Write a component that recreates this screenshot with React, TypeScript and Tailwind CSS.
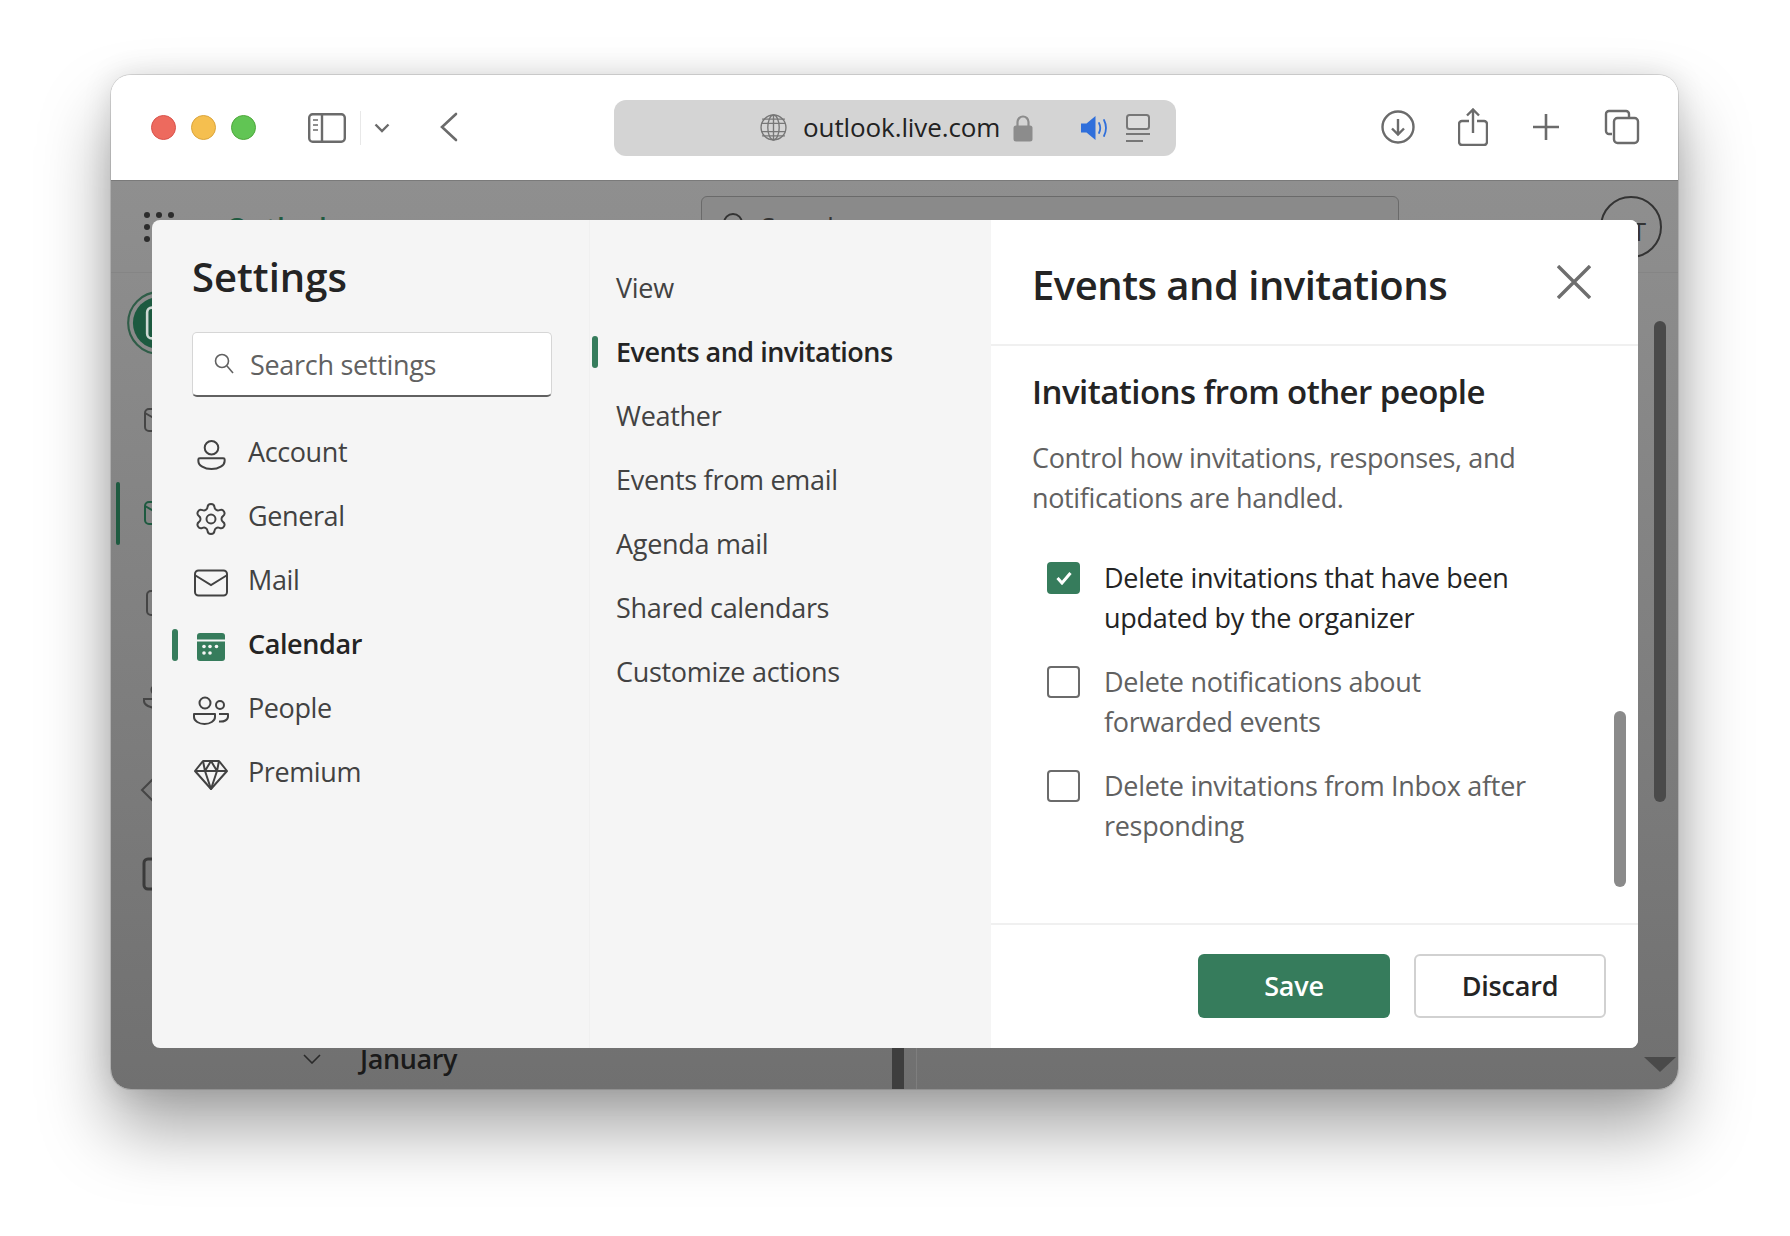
import React from "react";
import { Settings as SettingsIcon } from "lucide-react";

const font = "font-['Open_Sans','Noto_Sans',sans-serif]";

function Account() {
  return (
    <svg width="29" height="32" viewBox="0 0 32 33" fill="none" stroke="#424242" strokeWidth="2.200">
      <circle cx="16" cy="8.500" r="7.500" />
      <path d="M3 20h26c1 0 1.500.5 1.500 1.500v1.500c0 5-6.500 9-14.500 9S1.500 28 1.500 23v-1.500C1.500 20.500 2 20 3 20z" strokeLinejoin="round" />
    </svg>
  );
}
function Mail() {
  return (
    <svg width="34" height="28" viewBox="0 0 34 28" fill="none" stroke="#424242" strokeWidth="2">
      <rect x="1" y="1.500" width="32" height="25" rx="3.500" />
      <path d="M1.500 6.500 17 16 32.500 6.500" />
    </svg>
  );
}
function Cal() {
  return (
    <svg width="30" height="30" viewBox="0 0 30 30">
      <rect x="1" y="1" width="28" height="28" rx="3" fill="#367c5c" />
      <rect x="1" y="7.500" width="28" height="2" fill="#f5f5f5" />
      <g fill="#f5f5f5">
        <circle cx="8" cy="14.500" r="1.800" />
        <circle cx="14" cy="14.500" r="1.800" />
        <circle cx="20.500" cy="14.500" r="1.800" />
        <circle cx="8" cy="21" r="1.800" />
        <circle cx="14" cy="21" r="1.800" />
      </g>
    </svg>
  );
}
function People() {
  return (
    <svg width="36" height="30" viewBox="0 0 36 30" fill="none" stroke="#424242" strokeWidth="2">
      <circle cx="12" cy="7" r="5.500" />
      <circle cx="27" cy="9" r="4" />
      <path d="M1 18h21v3c0 4-5 7-10.500 7S1 25 1 21z" strokeLinejoin="round" />
      <path d="M26 18h9v2.500c0 3.500-4 5.500-9 5" strokeLinejoin="round" />
    </svg>
  );
}
function Diamond() {
  return (
    <svg width="34" height="32" viewBox="0 0 34 32" fill="none" stroke="#424242" strokeWidth="2" strokeLinejoin="round">
      <path d="M9 2h16l8 10-16 18L1 12z" />
      <path d="M1 12h32M11 12l6 18 6-18M9 2l2 10 6-10 6 10 2-10" />
    </svg>
  );
}

const sections: { label: string; icon: React.ReactNode; active?: boolean }[] = [
  { label: "Account", icon: <Account /> },
  { label: "General", icon: <SettingsIcon size={36} strokeWidth={1.300} color="#424242" /> },
  { label: "Mail", icon: <Mail /> },
  { label: "Calendar", icon: <Cal />, active: true },
  { label: "People", icon: <People /> },
  { label: "Premium", icon: <Diamond /> },
];

const subs = ["View", "Events and invitations", "Weather", "Events from email", "Agenda mail", "Shared calendars", "Customize actions"];

const checks = [
  { a: "Delete invitations that have been", b: "updated by the organizer", on: true },
  { a: "Delete notifications about", b: "forwarded events", on: false },
  { a: "Delete invitations from Inbox after", b: "responding", on: false },
];

function Toolbar() {
  return (
    <div className="flex h-[105px] items-center bg-white pl-[40px] pr-[38px]">
      <div className="flex gap-[15px]">
        <span className="h-[25px] w-[25px] rounded-full border border-[#d9534c] bg-[#ed6a5e]" />
        <span className="h-[25px] w-[25px] rounded-full border border-[#dba53c] bg-[#f5bf4f]" />
        <span className="h-[25px] w-[25px] rounded-full border border-[#4fa83d] bg-[#61c554]" />
      </div>
      <svg className="ml-[52px]" width="38" height="30" viewBox="0 0 38 30" fill="none" stroke="#6b6b6b" strokeWidth="2.400">
        <rect x="1.200" y="1.200" width="35.600" height="27.600" rx="3.500" />
        <path d="M14 1v28" />
        <path d="M5 7h5M5 12h5M5 17h5" strokeWidth="1.600" />
      </svg>
      <span className="ml-[14px] h-[34px] w-px bg-[#e8e8e8]" />
      <svg className="ml-[13px]" width="16" height="10" viewBox="0 0 16 10" fill="none" stroke="#6b6b6b" strokeWidth="2.400">
        <path d="M1.500 1.500 8 8l6.500-6.500" />
      </svg>
      <svg className="mb-[2px] ml-[49px]" width="20" height="30" viewBox="0 0 20 30" fill="none" stroke="#6b6b6b" strokeWidth="2.600" strokeLinecap="round">
        <path d="M17 2 3 15l14 13" />
      </svg>
      <div className="ml-[155px] flex h-[56px] w-[562px] items-center rounded-[12px] bg-[#d4d4d4] pl-[146px]">
        <svg width="27" height="27" viewBox="0 0 26 26" fill="none" stroke="#777" strokeWidth="1.300">
          <circle cx="13" cy="13" r="12" />
          <ellipse cx="13" cy="13" rx="5.500" ry="12" />
          <path d="M13 1v24M1.500 9h23M1.500 17h23M2 5h22M2 21h22" />
        </svg>
        <span className={`ml-[16px] text-[26px] text-[#222] ${font} tracking-[-0.1px]`}>outlook.live.com</span>
        <svg className="ml-[13px]" width="20" height="28" viewBox="0 0 20 28" fill="none">
          <path d="M4.500 12V8a5.500 5.500 0 0 1 11 0v4" stroke="#8c8c8c" strokeWidth="2.200" />
          <rect x="0.500" y="11.500" width="19" height="16" rx="2.500" fill="#8c8c8c" />
        </svg>
        <svg className="ml-[47px]" width="30" height="26" viewBox="0 0 30 26">
          <path d="M1 8.500h5.500L15.500 1v24l-9-7.500H1z" fill="#2f6fdb" />
          <path d="M19 8c1.500 3 1.500 7 0 10M24 5c2.500 5 2.500 11 0 16" fill="none" stroke="#2f6fdb" strokeWidth="1.800" strokeLinecap="round" />
        </svg>
        <svg className="ml-[16px]" width="24" height="28" viewBox="0 0 24 28" fill="none" stroke="#777" strokeWidth="2">
          <rect x="1" y="1" width="22" height="14" rx="2.500" fill="#dcdcdc" />
          <path d="M0 20h24M0 27h17" />
        </svg>
      </div>
      <div className="mb-[2px] ml-auto flex items-center">
        <svg width="34" height="34" viewBox="0 0 34 34" fill="none" stroke="#6b6b6b" strokeWidth="2.400">
          <circle cx="17" cy="17" r="15.500" />
          <path d="M17 9v15M11 18.500l6 6 6-6" />
        </svg>
        <svg className="ml-[43px]" width="30" height="38" viewBox="0 0 30 38" fill="none" stroke="#6b6b6b" strokeWidth="2.400">
          <path d="M11 13H4a3 3 0 0 0-3 3v18a3 3 0 0 0 3 3h22a3 3 0 0 0 3-3V16a3 3 0 0 0-3-3h-7" />
          <path d="M15 25V2M9 7.500 15 1.500l6 6" />
        </svg>
        <svg className="ml-[44px]" width="28" height="28" viewBox="0 0 28 28" fill="none" stroke="#6b6b6b" strokeWidth="2.600">
          <path d="M14 1v26M1 14h26" />
        </svg>
        <svg className="ml-[44px]" width="36" height="36" viewBox="0 0 36 36" fill="none" stroke="#6b6b6b" strokeWidth="2.400">
          <path d="M8 25H5a3 3 0 0 1-3-3V5a3 3 0 0 1 3-3h17a3 3 0 0 1 3 3v3" />
          <rect x="10" y="9" width="24" height="25" rx="3.500" />
        </svg>
      </div>
    </div>
  );
}

function Rail() {
  return (
    <div className="relative flex w-[100px] shrink-0 flex-col items-start pl-[16px] pt-[18px]">
      <span className="absolute left-[5px] top-[209px] h-[63px] w-[4px] rounded-full bg-[#1e5a40]" />
      <svg width="64" height="64" viewBox="0 0 54 54" fill="none">
        <circle cx="27" cy="27" r="26" stroke="#2f5d48" strokeWidth="1.800" />
        <circle cx="27" cy="27" r="22" fill="#1d5a40" />
        <rect x="17" y="14" width="20" height="26" rx="4" stroke="#cfd8d3" strokeWidth="2.200" />
      </svg>
      <svg className="ml-[17px] mt-[53px]" width="30" height="24" viewBox="0 0 30 24" fill="none" stroke="#454545" strokeWidth="2">
        <rect x="1" y="1" width="28" height="22" rx="4" />
        <path d="m1 5 14 8 14-8" />
      </svg>
      <svg className="ml-[17px] mt-[69px]" width="30" height="24" viewBox="0 0 30 24" fill="none" stroke="#1e5a40" strokeWidth="2">
        <rect x="1" y="1" width="28" height="22" rx="4" />
        <path d="m1 5 14 8 14-8" />
      </svg>
      <svg className="ml-[19px] mt-[65px]" width="30" height="26" viewBox="0 0 30 26" fill="none" stroke="#454545" strokeWidth="2">
        <rect x="1" y="1" width="28" height="24" rx="4" />
      </svg>
      <svg className="ml-[15px] mt-[67px]" width="30" height="26" viewBox="0 0 30 26" fill="none" stroke="#454545" strokeWidth="2">
        <circle cx="15" cy="7" r="5.500" />
        <path d="M2 16h26v2c0 4-6 7-13 7S2 22 2 18z" />
      </svg>
      <svg className="ml-[12px] mt-[66px]" width="30" height="30" viewBox="0 0 30 30" fill="none" stroke="#454545" strokeWidth="2">
        <path d="m15 3 12 12-12 12L3 15z" />
      </svg>
      <svg className="ml-[15px] mt-[52px]" width="30" height="34" viewBox="0 0 30 34" fill="none" stroke="#3a3a3a" strokeWidth="3">
        <rect x="2" y="2" width="26" height="30" rx="4" />
        <circle cx="15" cy="11" r="3" />
        <circle cx="15" cy="23" r="3" />
      </svg>
    </div>
  );
}

function DimmedPage() {
  return (
    <div className="flex flex-1 flex-col border-t border-[#7a7a7a] bg-gradient-to-b from-[#8f8f8f] via-[#808080] to-[#707070]">
      <div className="flex h-[92px] shrink-0 items-start border-b border-[#858585] pl-[33px] pr-[16px]">
        <div className="mt-[31px] grid grid-cols-3 gap-[6px]">
          {Array.from({ length: 9 }).map((_, i) => (
            <span key={i} className="h-[6px] w-[6px] rounded-full bg-[#2c2c2c]" />
          ))}
        </div>
        <span className={`ml-[52px] mt-[26px] text-[28px] font-semibold text-[#1f5a40] ${font}`}>Outlook</span>
        <div className="ml-[366px] mt-[15px] flex h-[60px] w-[698px] items-start rounded-[6px] border border-[#6a6a6a] bg-[#8a8a8a] pl-[20px] pt-[10px]">
          <svg className="mt-[5px]" width="24" height="24" viewBox="0 0 24 24" fill="none" stroke="#333" strokeWidth="2">
            <circle cx="11" cy="11" r="9" />
          </svg>
          <span className={`ml-[15px] text-[26px] text-[#333] ${font}`}>Search</span>
        </div>
        <div className="ml-auto mt-[15px] flex h-[62px] w-[62px] items-center justify-center rounded-full border-2 border-[#333] pl-[16px] pt-[8px]">
          <span className={`text-[26px] text-[#333] ${font}`}>T</span>
        </div>
      </div>
      <div className="flex flex-1">
        <Rail />
        <div className="flex w-[681px] shrink-0 flex-col justify-end pb-[10px] pl-[92px]">
          <div className="flex h-[40px] items-center gap-[39px]">
            <svg width="18" height="10" viewBox="0 0 18 10" fill="none" stroke="#2a2a2a" strokeWidth="1.600">
              <path d="M1 1l8 8 8-8" />
            </svg>
            <span className={`text-[27px] font-semibold tracking-[-0.4px] text-[#1a1a1a] ${font}`}>January</span>
          </div>
        </div>
        <div className="w-[12px] shrink-0 bg-[#3e3e3e]" />
        <div className="ml-[12px] w-px shrink-0 bg-[#7e7e7e]" />
        <div className="flex-1" />
        <div className="mr-[2px] flex w-[32px] shrink-0 flex-col items-center pb-[17px] pt-[48px]">
          <span className="h-[481px] w-[12px] rounded-full bg-[#4a4a4a]" />
          <svg className="mt-auto" width="32" height="15" viewBox="0 0 32 15">
            <path d="M0 0h32L16 15z" fill="#4a4a4a" />
          </svg>
        </div>
      </div>
    </div>
  );
}

export default function App() {
  return (
    <div className={`h-[1236px] w-[1790px] bg-white pl-[111px] pt-[75px] ${font}`}>
      <div className="relative flex h-[1014px] w-[1567px] flex-col overflow-hidden rounded-[20px] shadow-[0_0_0_1px_rgba(0,0,0,0.12),0_0_30px_rgba(0,0,0,0.12),0_40px_70px_rgba(0,0,0,0.36)]">
        <Toolbar />
        <DimmedPage />
        <div className="absolute left-[41px] top-[145px] flex h-[828px] w-[1486px] overflow-hidden rounded-[8px] bg-[#f5f5f5]">
          <aside className="flex w-[438px] flex-col border-r border-[#f0f0f0] pl-[40px] pr-[37px]">
            <h1 className="mt-[29px] text-[40px] font-semibold leading-[56px] text-[#242424]">Settings</h1>
            <div className="mt-[27px] flex h-[65px] items-center rounded-[5px] border border-[#d6d6d6] border-b-[2px] border-b-[#616161] bg-white pl-[21px]">
              <svg width="20" height="22" viewBox="0 0 20 22" fill="none" stroke="#616161" strokeWidth="1.600">
                <circle cx="8" cy="8" r="6.500" />
                <path d="m13 13 6 7" />
              </svg>
              <span className="ml-[16px] mt-[2px] text-[27px] text-[#616161] tracking-[-0.3px]">Search settings</span>
            </div>
            <nav className="mt-[23px] flex flex-col">
              {sections.map((s) => (
                <div key={s.label} className="relative flex h-[64px] items-center">
                  {s.active && <span className="absolute left-[-20px] top-[17px] h-[32px] w-[6px] rounded-full bg-[#367c5c]" />}
                  <span className="mt-[6px] flex w-[38px] justify-center">{s.icon}</span>
                  <span className={`ml-[18px] text-[27px] tracking-[-0.4px] ${s.active ? "font-semibold text-[#242424]" : "text-[#424242]"}`}>{s.label}</span>
                </div>
              ))}
            </nav>
          </aside>
          <div className="flex w-[401px] flex-col pl-[26px] pt-[36px]">
            {subs.map((s, i) => (
              <div key={s} className="relative flex h-[64px] items-center">
                {i === 1 && <span className="absolute left-[-24px] top-[16px] h-[32px] w-[6px] rounded-full bg-[#367c5c]" />}
                <span className={`text-[27px] ${i === 1 ? "font-semibold tracking-[-0.5px] text-[#242424]" : "tracking-[-0.3px] text-[#424242]"}`}>{s}</span>
              </div>
            ))}
          </div>
          <main className="relative flex flex-1 flex-col bg-white">
            <div className="flex h-[126px] shrink-0 items-start justify-between border-b-2 border-[#f0f0f0] pl-[41px] pr-[47px]">
              <h2 className="mt-[37px] text-[40px] font-semibold leading-[56px] text-[#242424] tracking-[-0.5px]">Events and invitations</h2>
              <svg className="mt-[45px]" width="34" height="34" viewBox="0 0 34 34" stroke="#6e6e6e" strokeWidth="3.400" fill="none">
                <path d="m1 1 32 32M33 1 1 33" />
              </svg>
            </div>
            <div className="flex-1 pl-[41px] pr-[60px]">
              <h3 className="mt-[24px] text-[33px] font-semibold leading-[44px] text-[#242424] tracking-[-0.55px]">Invitations from other people</h3>
              <p className="mt-[24px] text-[27px] leading-[40px] text-[#616161] tracking-[-0.35px]">
                Control how invitations, responses, and<br />notifications are handled.
              </p>
              <div className="mt-[40px] flex flex-col gap-[24px] pl-[15px]">
                {checks.map((c) => (
                  <div key={c.a} className="flex items-start">
                    <span className={`mt-[4px] flex h-[32px] w-[33px] shrink-0 items-center justify-center rounded-[4px] ${c.on ? "bg-[#367c5c]" : "border-2 border-[#6b6b6b] bg-white"}`}>
                      {c.on && (
                        <svg width="16" height="14" viewBox="0 0 16 14" fill="none" stroke="#fff" strokeWidth="3">
                          <path d="m1.500 7 4.500 5L14.500 2" />
                        </svg>
                      )}
                    </span>
                    <span className={`ml-[24px] text-[27px] leading-[40px] tracking-[-0.3px] ${c.on ? "text-[#242424]" : "text-[#616161]"}`}>
                      {c.a}<br />{c.b}
                    </span>
                  </div>
                ))}
              </div>
            </div>
            <div className="flex h-[125px] shrink-0 items-start justify-end gap-[24px] border-t-2 border-[#f0f0f0] pr-[32px] pt-[29px]">
              <button className="h-[64px] w-[192px] rounded-[6px] bg-[#367c5c] text-[27px] font-semibold tracking-[-0.2px] text-white">Save</button>
              <button className="h-[64px] w-[192px] rounded-[6px] border-2 border-[#d1d1d1] bg-white text-[27px] font-semibold tracking-[-0.2px] text-[#242424]">Discard</button>
            </div>
            <span className="absolute right-[12px] top-[491px] h-[176px] w-[12px] rounded-full bg-[#8a8a8a]" />
          </main>
        </div>
      </div>
    </div>
  );
}
